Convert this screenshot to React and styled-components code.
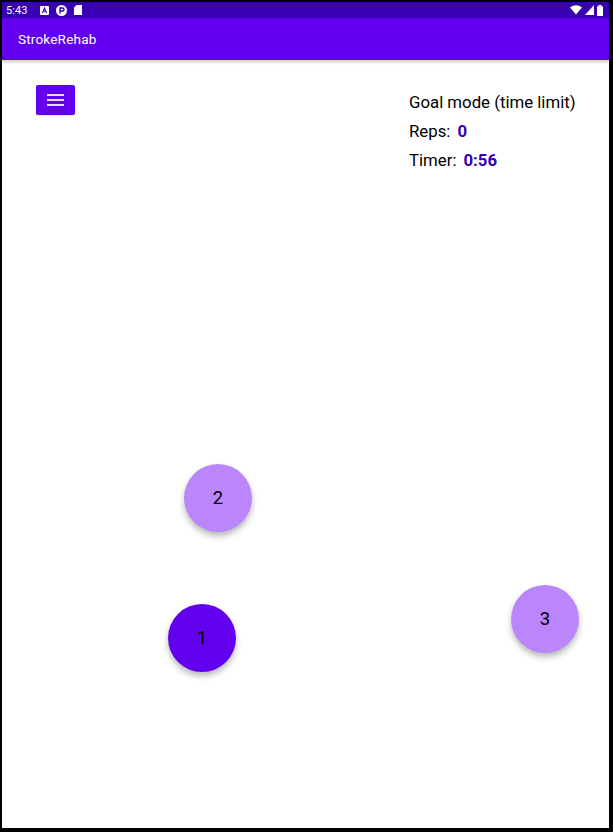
import React from "react";
import styled, { createGlobalStyle } from "styled-components";

const Global = createGlobalStyle`
  html, body { margin: 0; padding: 0; background: #000; }
  body { font-family: Roboto, "Noto Sans", Arial, sans-serif; }
  * { box-sizing: border-box; }
`;

const Frame = styled.div`
  margin: 2px 4px 0 2px;
  width: 607px;
  height: 826px;
  background: #fff;
  display: flex;
  flex-direction: column;
  overflow: hidden;
`;

const StatusBar = styled.div`
  height: 16px;
  background: #3700b3;
  display: flex;
  align-items: center;
  justify-content: space-between;
  padding: 0 6px 0 4px;
  color: #fff;
  font-size: 11px;
`;

const StatusGroup = styled.div`
  display: flex;
  align-items: center;
  gap: ${(p) => p.$gap || 8}px;
`;

const Time = styled.span`
  font-family: Roboto, sans-serif;
  font-size: 11px;
  margin-right: 5px;
  letter-spacing: 0.1px;
`;

const AppBar = styled.header`
  height: 42px;
  background: #6200ee;
  display: flex;
  align-items: center;
  padding-left: 16px;
  box-shadow: 0 2px 3px rgba(0, 0, 0, 0.22);
  position: relative;
  z-index: 1;
`;

const Title = styled.h1`
  margin: 0;
  color: #fff;
  font-size: 13.6px;
  font-weight: 400;
  letter-spacing: 0.15px;
`;

const Content = styled.main`
  position: relative;
  flex: 1;
`;

const TopRow = styled.div`
  display: grid;
  grid-template-columns: 373px auto;
  padding: 25px 0 0 34px;
`;

const MenuButton = styled.button`
  width: 39px;
  height: 30px;
  border: none;
  border-radius: 2px;
  background: #6200ee;
  display: flex;
  align-items: center;
  justify-content: center;
  padding: 0;
  box-shadow: 0 1px 2px rgba(0, 0, 0, 0.15);
`;

const Info = styled.div`
  display: flex;
  flex-direction: column;
  padding-top: 2px;
`;

const InfoLine = styled.div`
  height: 29px;
  display: flex;
  align-items: center;
  gap: 7px;
  font-size: 16.8px;
  color: #000;
`;

const Value = styled.span`
  font-weight: 700;
  color: #3700b3;
`;

const Target = styled.div`
  position: absolute;
  width: 68px;
  height: 68px;
  border-radius: 50%;
  background: ${(p) => (p.$active ? "#6200ee" : "#bb86fc")};
  display: flex;
  align-items: center;
  justify-content: center;
  font-size: 18.5px;
  color: #000;
  box-shadow: 0 4px 6px rgba(0, 0, 0, 0.28);
`;

const Target1 = styled(Target)`left: 166px; top: 544px;`;
const Target2 = styled(Target)`left: 182px; top: 404px;`;
const Target3 = styled(Target)`left: 509px; top: 525px;`;

const Hamburger = () => (
  <svg width="17" height="14" viewBox="0 0 17 14">
    <rect x="0" y="1" width="17" height="2" fill="#e6d9ff" />
    <rect x="0" y="6" width="17" height="2" fill="#e6d9ff" />
    <rect x="0" y="11" width="17" height="2" fill="#e6d9ff" />
  </svg>
);

export default function App() {
  return (
    <>
      <Global />
      <Frame>
        <StatusBar>
          <StatusGroup $gap={7}>
            <Time>5:43</Time>
            <svg width="9" height="9" viewBox="0 0 9 9">
              <rect x="0" y="0" width="9" height="9" rx="1" fill="#fff" />
              <path d="M2.5 7 L4.5 2 L6.5 7 M3.3 5.2 H5.7" stroke="#3700b3" strokeWidth="1.1" fill="none" />
            </svg>
            <svg width="11" height="11" viewBox="0 0 11 11">
              <circle cx="5.5" cy="5.5" r="5.5" fill="#fff" />
              <path d="M4 8.5 V3 H6.5 A1.5 1.5 0 0 1 6.5 6 H4" stroke="#3700b3" strokeWidth="1.4" fill="none" />
            </svg>
            <svg width="8" height="10" viewBox="0 0 8 10">
              <path d="M2.5 0 H8 V10 H0 V2.5 Z" fill="#fff" />
            </svg>
          </StatusGroup>
          <StatusGroup $gap={3}>
            <svg width="12" height="10" viewBox="0 0 12 10">
              <path d="M0 2.5 Q6 -2 12 2.5 L6 9.5 Z" fill="#fff" />
            </svg>
            <svg width="9" height="10" viewBox="0 0 9 10">
              <path d="M9 0 V10 H0 Z" fill="#fff" />
            </svg>
            <svg width="6" height="11" viewBox="0 0 6 11">
              <rect x="1.5" y="0" width="3" height="1.5" fill="#fff" />
              <rect x="0" y="1.2" width="6" height="9.8" rx="0.5" fill="#fff" />
            </svg>
          </StatusGroup>
        </StatusBar>
        <AppBar>
          <Title>StrokeRehab</Title>
        </AppBar>
        <Content>
          <TopRow>
            <div>
              <MenuButton aria-label="menu">
                <Hamburger />
              </MenuButton>
            </div>
            <Info>
              <InfoLine>Goal mode (time limit)</InfoLine>
              <InfoLine>
                Reps: <Value>0</Value>
              </InfoLine>
              <InfoLine>
                Timer: <Value>0:56</Value>
              </InfoLine>
            </Info>
          </TopRow>
          <Target2>2</Target2>
          <Target1 $active>1</Target1>
          <Target3>3</Target3>
        </Content>
      </Frame>
    </>
  );
}
